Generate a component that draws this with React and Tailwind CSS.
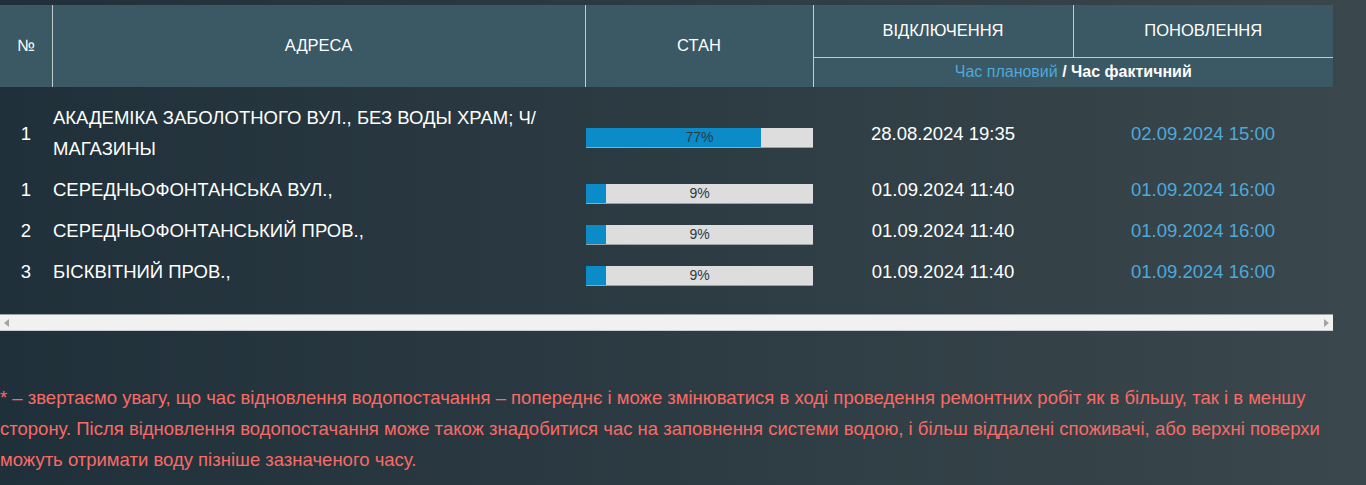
const rows = [
  { n: '1', addr: 'АКАДЕМІКА ЗАБОЛОТНОГО ВУЛ., БЕЗ ВОДЫ ХРАМ; Ч/ МАГАЗИНЫ', pct: 77, off: '28.08.2024 19:35', on: '02.09.2024 15:00' },
  { n: '1', addr: 'СЕРЕДНЬОФОНТАНСЬКА ВУЛ.,', pct: 9, off: '01.09.2024 11:40', on: '01.09.2024 16:00' },
  { n: '2', addr: 'СЕРЕДНЬОФОНТАНСЬКИЙ ПРОВ.,', pct: 9, off: '01.09.2024 11:40', on: '01.09.2024 16:00' },
  { n: '3', addr: 'БІСКВІТНИЙ ПРОВ.,', pct: 9, off: '01.09.2024 11:40', on: '01.09.2024 16:00' },
];

function Progress({ pct }) {
  return (
    <div className="relative h-[20px] w-[227px] bg-[#dddddd] border-b border-[#9aa3a6]">
      <div className="h-full bg-[#0b8bc7]" style={{ width: `${pct}%` }}></div>
      <span className="absolute inset-0 flex items-center justify-center text-[14px] text-[#2c3a44]">{pct}%</span>
    </div>
  );
}

export default function App() {
  return (
    <div className="w-[1366px] h-[485px] overflow-hidden bg-linear-to-r from-[#20303a] to-[#3a474c] text-white" style={{ fontFamily: '"Liberation Sans", Arial, sans-serif' }}>
      <div className="pt-[5px] w-[1333px]">
        <table className="w-[1333px] table-fixed border-collapse">
          <colgroup>
            <col className="w-[52px]" />
            <col className="w-[533px]" />
            <col className="w-[228px]" />
            <col className="w-[260px]" />
            <col className="w-[260px]" />
          </colgroup>
          <thead className="bg-[#3b5865] text-[16.5px] font-normal">
            <tr className="h-[52px]">
              <th rowSpan={2} className="font-normal border-r border-[#c3cbce] pb-[2px]">№</th>
              <th rowSpan={2} className="font-normal border-r border-[#c3cbce] pb-[2px]">АДРЕСА</th>
              <th rowSpan={2} className="font-normal border-r border-[#c3cbce] pb-[2px]">СТАН</th>
              <th className="font-normal border-r border-b border-[#c3cbce]">ВІДКЛЮЧЕННЯ</th>
              <th className="font-normal border-b border-[#c3cbce]">ПОНОВЛЕННЯ</th>
            </tr>
            <tr className="h-[30px]">
              <th colSpan={2} className="font-normal text-[16px]">
                <span className="text-[#4fa9d9]">Час плановий</span> <span className="font-bold">/ Час фактичний</span>
              </th>
            </tr>
          </thead>
          <tbody className="text-[18.5px] leading-[31px]">
            <tr className="h-[10px]"><td colSpan={5}></td></tr>
            {rows.map((r, i) => (
              <tr key={i}>
                <td className="text-center py-[5px] align-middle">{r.n}</td>
                <td className="pl-px py-[5px] align-middle">{r.addr}</td>
                <td className="py-[5px] pl-px align-middle"><div className="mt-[9px]"><Progress pct={r.pct} /></div></td>
                <td className="text-center py-[5px] align-middle">{r.off}</td>
                <td className="text-center py-[5px] align-middle text-[#4fa9d9]">{r.on}</td>
              </tr>
            ))}
          </tbody>
        </table>
        <div className="mt-[22px] h-[17px] bg-[#f1f1f1] border-t border-[#9aa5a9] border-b border-b-[#c9cdce] flex items-center justify-between px-[4px]">
          <svg width="5" height="8" viewBox="0 0 5 8"><path d="M5 0 L0 4 L5 8 Z" fill="#a3a3a3" /></svg>
          <svg width="5" height="8" viewBox="0 0 5 8"><path d="M0 0 L5 4 L0 8 Z" fill="#a3a3a3" /></svg>
        </div>
      </div>
      <p className="mt-[51px] text-[18.5px] leading-[31px] text-[#f86b66]">
        * – звертаємо увагу, що час відновлення водопостачання – попереднє і може змінюватися в ході проведення ремонтних робіт як в більшу, так і в меншу сторону. Після відновлення водопостачання може також знадобитися час на заповнення системи водою, і більш віддалені споживачі, або верхні поверхи можуть отримати воду пізніше зазначеного часу.
      </p>
    </div>
  );
}
